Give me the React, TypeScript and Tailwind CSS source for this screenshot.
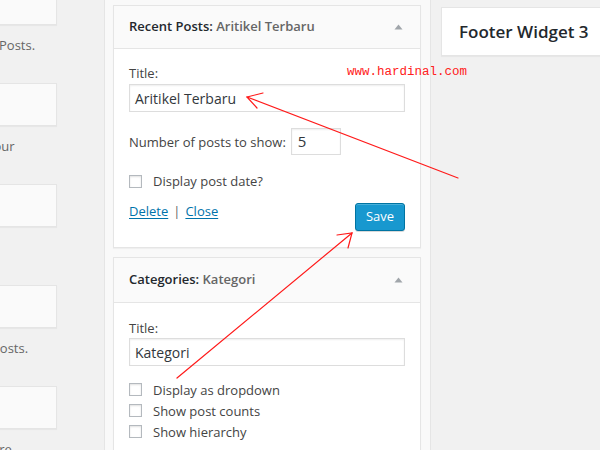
import React from "react";

const font = { fontFamily: '"Open Sans", "Noto Sans", sans-serif' };

function Checkbox() {
  return (
    <span className="inline-block w-[13px] h-[13px] border border-[#b4b9be] bg-white shadow-[inset_0_1px_2px_rgba(0,0,0,0.12)] shrink-0" />
  );
}

function Caret() {
  return (
    <svg width="9" height="6" viewBox="0 0 9 6" className="shrink-0">
      <path d="M0.5 5.5 L4.5 0.5 L8.5 5.5 Z" fill="#a0a5aa" />
    </svg>
  );
}

function WidgetHeader({ name, title, tall }: { name: string; title: string; tall?: boolean }) {
  return (
    <div
      className={`${tall ? "h-[45px]" : "h-[43px]"} bg-[#fafafa] border-b border-[#e5e5e5] flex items-center justify-between pl-[15px] pr-[17px]`}
    >
      <div className="text-[13px] font-semibold text-[#23282d]">
        {name}: <span className="text-[#666]">{title}</span>
      </div>
      <Caret />
    </div>
  );
}

function LeftColumn() {
  const items = [
    { text: "Posts.", shift: "-ml-[1px]" },
    { text: "your", shift: "-ml-[13px]" },
    { text: "", shift: "" },
    { text: "Posts.", shift: "-ml-[8px]" },
    { text: "are", shift: "-ml-[8px]" },
  ];
  return (
    <div className="w-[104px] shrink-0 overflow-hidden flex flex-col mt-[-18px]">
      {items.map((it, i) => (
        <div key={i} className="h-[101px] shrink-0 flex flex-col">
          <div className="h-[43px] w-[58px] -ml-[1px] bg-[#fafafa] border border-[#e5e5e5] shadow-[0_1px_1px_rgba(0,0,0,0.04)]" />
          <p className={`mt-[11px] text-[13px] leading-[18px] text-[#666] whitespace-nowrap ${it.shift}`}>
            {it.text}
          </p>
        </div>
      ))}
    </div>
  );
}

function RecentPosts() {
  return (
    <div className="mt-[5px] bg-white border border-[#e5e5e5] shadow-[0_1px_1px_rgba(0,0,0,0.04)]">
      <WidgetHeader name="Recent Posts" title="Aritikel Terbaru" />
      <div className="px-[15px] pt-[15px] pb-[16px] text-[13px] text-[#444]">
        <div className="leading-[18px]">Title:</div>
        <div className="mt-[2px] h-[28px] border border-[#ddd] shadow-[inset_0_1px_2px_rgba(0,0,0,0.07)] flex items-center px-[5px] text-[14px] text-[#32373c]">
          Aritikel Terbaru
        </div>
        <div className="mt-[16px] flex items-center h-[27px]">
          <span className="leading-[18px]">Number of posts to show:</span>
          <div className="ml-[5px] w-[50px] h-[27px] border border-[#ddd] shadow-[inset_0_1px_2px_rgba(0,0,0,0.07)] flex items-center px-[6px] text-[15px] text-[#32373c]">
            5
          </div>
        </div>
        <div className="mt-[16px] flex items-center h-[20px]">
          <Checkbox />
          <span className="ml-[11px] leading-[18px]">Display post date?</span>
        </div>
        <div className="mt-[11px] flex justify-between items-start">
          <div className="leading-[18px]">
            <span className="text-[#0073aa] underline underline-offset-2">Delete</span>
            <span className="text-[#666] mx-[5px]">|</span>
            <span className="text-[#0073aa] underline underline-offset-2">Close</span>
          </div>
          <div className="mt-[1px] h-[28px] w-[50px] rounded-[3px] bg-[#1898cf] border border-[#0074a2] shadow-[inset_0_1px_0_rgba(120,200,230,0.5),0_1px_0_rgba(0,0,0,0.15)] flex items-center justify-center text-white text-[13px]">
            Save
          </div>
        </div>
      </div>
    </div>
  );
}

function Categories() {
  const opts = ["Display as dropdown", "Show post counts", "Show hierarchy"];
  return (
    <div className="mt-[9px] bg-white border border-[#e5e5e5] shadow-[0_1px_1px_rgba(0,0,0,0.04)]">
      <WidgetHeader name="Categories" title="Kategori" tall />
      <div className="px-[15px] pt-[16px] pb-[15px] text-[13px] text-[#444]">
        <div className="leading-[18px]">Title:</div>
        <div className="mt-[1px] h-[28px] border border-[#ddd] shadow-[inset_0_1px_2px_rgba(0,0,0,0.07)] flex items-center px-[5px] text-[14px] text-[#32373c]">
          Kategori
        </div>
        <div className="mt-[13px] flex flex-col">
          {opts.map((o) => (
            <div key={o} className="h-[21px] flex items-center">
              <Checkbox />
              <span className="ml-[11px] leading-[18px]">{o}</span>
            </div>
          ))}
        </div>
      </div>
    </div>
  );
}

function Annotations() {
  return (
    <svg
      className="absolute inset-0 pointer-events-none"
      width="600"
      height="450"
      viewBox="0 0 600 450"
    >
      <g stroke="#ff1a1a" strokeWidth="1.2" fill="none" strokeLinecap="round">
        <path d="M458 178 L247 97" />
        <path d="M263 93 L247 97 L257 108" />
        <path d="M177 378 L352 233" />
        <path d="M337 235 L352 233 L348 248" />
      </g>
    </svg>
  );
}

export default function App() {
  return (
    <div
      className="relative w-[600px] h-[450px] overflow-hidden bg-[#f1f1f1] flex items-start"
      style={font}
    >
      <LeftColumn />
      <div className="w-[327px] shrink-0 h-[470px] -mt-[10px] pt-[10px] bg-[#f9f9f9] border-x border-[#e5e5e5] pl-[8px] pr-[9px]">
        <RecentPosts />
        <Categories />
      </div>
      <div className="flex-1 pl-[10px] pt-[7px]">
        <div className="h-[49px] bg-white border border-[#e5e5e5] border-r-0 shadow-[0_1px_1px_rgba(0,0,0,0.04)] flex items-center pl-[17px] text-[17px] font-semibold text-[#23282d] whitespace-nowrap">
          Footer Widget 3
        </div>
      </div>
      <div
        className="absolute left-[347px] top-[64px] text-[12.5px] leading-[16px] text-[#ff2020]"
        style={{ fontFamily: '"Liberation Mono", "DejaVu Sans Mono", monospace' }}
      >
        www.hardinal.com
      </div>
      <Annotations />
    </div>
  );
}
